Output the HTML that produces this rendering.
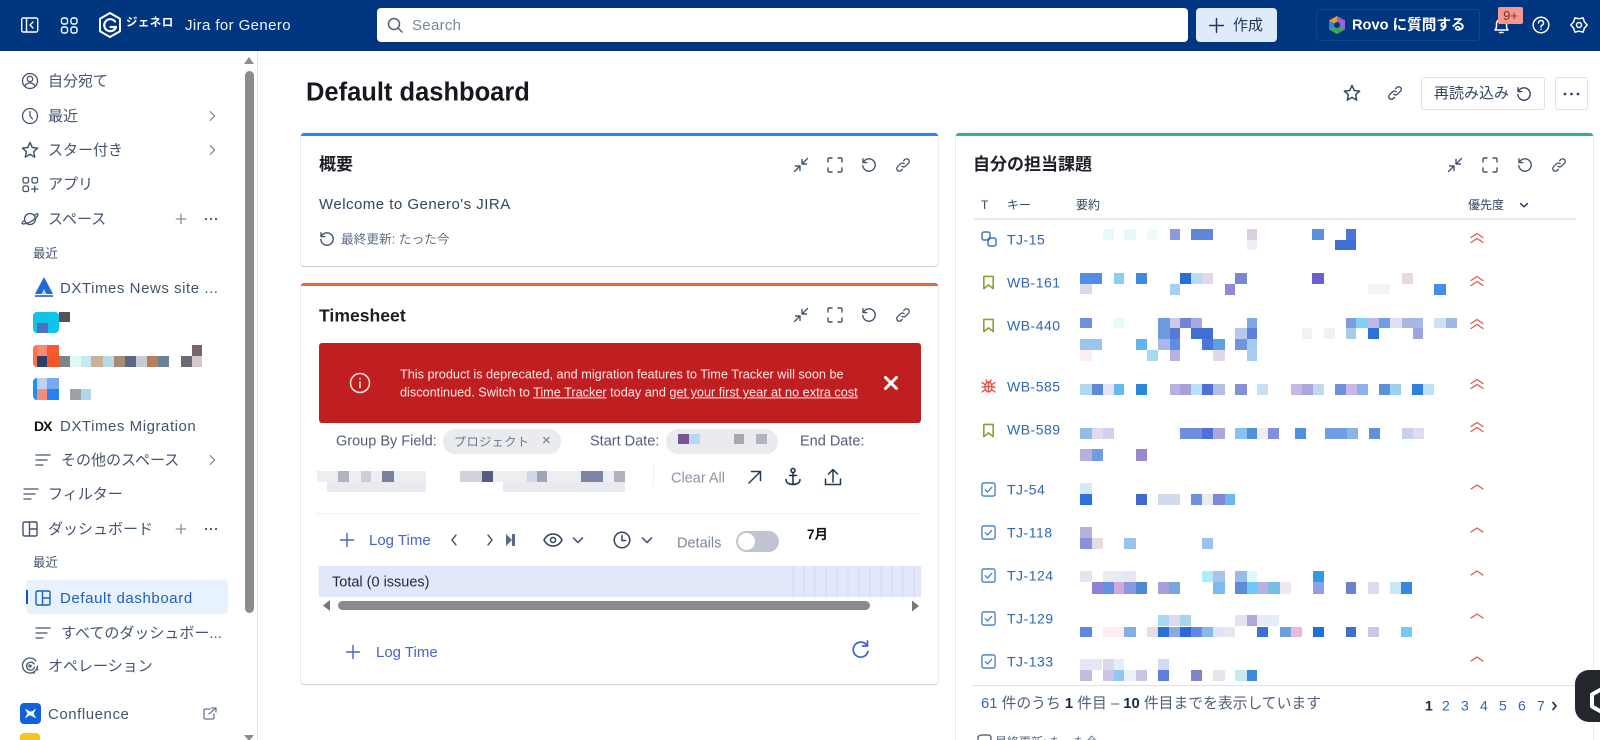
<!DOCTYPE html>
<html lang="ja"><head><meta charset="utf-8"><title>Default dashboard</title>
<style>
html,body{margin:0;padding:0;width:1600px;height:740px;overflow:hidden;background:#fff}
body{position:relative;font-family:"Liberation Sans","Noto Sans CJK JP",sans-serif;color:#42526e;font-size:14px;filter:blur(.3px)}
.t{position:absolute;white-space:nowrap;transform:translateY(-50%);line-height:1.2;margin-top:1px}
.b{position:absolute;box-sizing:border-box}
.card{position:absolute;box-sizing:border-box;background:#fff;border-radius:3px;box-shadow:0 0 1px rgba(9,30,66,.35),0 1px 1px rgba(9,30,66,.18)}
.s{color:#44546f;font-size:15px}
.e{color:#44546f;font-size:15px;letter-spacing:.55px}
.k{color:#2f66b8;font-size:14px;letter-spacing:.5px}
.h{color:#1c1f26;font-size:17px;font-weight:bold}
.lt{color:#4a62c9;font-size:15px}
svg{position:absolute;left:0;top:0}
</style></head><body>

<!-- top bar -->
<div class="b" style="left:0;top:0;width:1600px;height:51px;background:#00357f;border-bottom:1px solid #0a2f68"></div>
<div class="b" style="left:377px;top:8px;width:811px;height:34px;background:#fff;border-radius:4px"></div>
<div class="t" style="left:412px;top:25px;color:#7a869a;font-size:15px;letter-spacing:.3px">Search</div>
<div class="b" style="left:1196px;top:8px;width:81px;height:34px;background:#dfeafb;border-radius:4px"></div>
<div class="t" style="left:1233px;top:25px;color:#253858;font-size:15px">作成</div>
<div class="b" style="left:1316px;top:9px;width:164px;height:32px;border:1px solid #12478f;border-radius:4px"></div>
<div class="t" style="left:1352px;top:25px;color:#fff;font-size:14.6px;font-weight:bold">Rovo に質問する</div>
<div class="t" style="left:126px;top:23px;color:#fff;font-size:11.5px;font-weight:bold;letter-spacing:.4px">ジェネロ</div>
<div class="t" style="left:185px;top:25px;color:#f1f5fb;font-size:15px;letter-spacing:.4px">Jira for Genero</div>

<!-- sidebar -->
<div class="b" style="left:257px;top:51px;width:1px;height:689px;background:#e4e6ea"></div>
<div class="b" style="left:245px;top:71px;width:9px;height:542px;background:#8c8c8c;border-radius:5px"></div>
<div class="b" style="left:26px;top:580px;width:202px;height:34px;background:#e8f2fe;border-radius:4px"></div>
<div class="b" style="left:26px;top:590px;width:2px;height:14px;background:#0c55c4"></div>
<div class="t s" style="left:48px;top:81px">自分宛て</div>
<div class="t s" style="left:48px;top:116px">最近</div>
<div class="t s" style="left:48px;top:150px">スター付き</div>
<div class="t s" style="left:48px;top:184px">アプリ</div>
<div class="t s" style="left:48px;top:219px">スペース</div>
<div class="t s" style="left:33px;top:253px;font-size:12.4px">最近</div>
<div class="t e" style="left:60px;top:288px">DXTimes News site ...</div>
<div class="t e" style="left:60px;top:426px">DXTimes Migration</div>
<div class="t s" style="left:61px;top:460px">その他のスペース</div>
<div class="t s" style="left:48px;top:494px">フィルター</div>
<div class="t s" style="left:48px;top:529px">ダッシュボード</div>
<div class="t s" style="left:33px;top:562px;font-size:12.4px">最近</div>
<div class="t" style="left:60px;top:598px;color:#1f5fbf;font-size:15px;letter-spacing:.6px">Default dashboard</div>
<div class="t s" style="left:61px;top:633px">すべてのダッシュボー...</div>
<div class="t s" style="left:48px;top:666px">オペレーション</div>
<div class="t e" style="left:48px;top:714px">Confluence</div>
<div class="b" style="left:20px;top:733px;width:20px;height:10px;background:#f5c518;border-radius:4px"></div>
<div class="b" style="left:20px;top:703px;width:21px;height:21px;background:#0f62dc;border-radius:4px"></div>

<!-- main title -->
<div class="t" style="left:306px;top:92px;color:#15181f;font-size:25.5px;font-weight:bold">Default dashboard</div>
<div class="b" style="left:1421px;top:77px;width:124px;height:33px;border:1px solid #dfe1e6;border-radius:3px"></div>
<div class="t" style="left:1434px;top:93px;color:#344563;font-size:15px">再読み込み</div>
<div class="b" style="left:1555px;top:77px;width:33px;height:33px;border:1px solid #dfe1e6;border-radius:3px"></div>

<!-- cards -->
<div class="card" style="left:301px;top:133px;width:637px;height:133px;border-top:3px solid #2684ff"></div>
<div class="card" style="left:301px;top:283px;width:637px;height:401px;border-top:3px solid #e5683a"></div>
<div class="card" style="left:956px;top:133px;width:637px;height:640px;border-top:3px solid #36b37e"></div>

<div class="t h" style="left:319px;top:164px">概要</div>
<div class="t" style="left:319px;top:204px;color:#344563;font-size:15px;letter-spacing:.48px">Welcome to Genero's JIRA</div>
<div class="t" style="left:341px;top:239px;color:#5e6c84;font-size:12.7px">最終更新: たった今</div>

<div class="t h" style="left:319px;top:315px;font-size:17.6px">Timesheet</div>
<div class="b" style="left:319px;top:343px;width:602px;height:80px;background:#c01f22;border-radius:3px"></div>
<div class="t" style="left:400px;top:374px;color:#fde8e8;font-size:12.7px">This product is deprecated, and migration features to Time Tracker will soon be</div>
<div class="t" style="left:400px;top:392px;color:#fde8e8;font-size:12.7px">discontinued. Switch to <u>Time Tracker</u> today and <u>get your first year at no extra cost</u></div>
<div class="t" style="left:336px;top:441px;color:#505f79;font-size:14.5px">Group By Field:</div>
<div class="b" style="left:443px;top:429px;width:118px;height:25px;background:#e9ebef;border-radius:12px"></div>
<div class="t" style="left:454px;top:441px;color:#6b778c;font-size:12px;letter-spacing:.6px">プロジェクト</div>
<div class="t" style="left:542px;top:440px;color:#6b778c;font-size:15px">×</div>
<div class="t" style="left:590px;top:441px;color:#505f79;font-size:14.5px">Start Date:</div>
<div class="b" style="left:666px;top:429px;width:112px;height:25px;background:#e9ebef;border-radius:12px"></div>
<div class="t" style="left:800px;top:441px;color:#505f79;font-size:14.5px">End Date:</div>
<div class="b" style="left:653px;top:465px;width:1px;height:21px;background:#eef0f2"></div>
<div class="t" style="left:671px;top:478px;color:#8c95a6;font-size:14.5px">Clear All</div>
<div class="b" style="left:317px;top:513px;width:603px;height:1px;background:#eef0f3"></div>
<div class="t lt" style="left:369px;top:540px">Log Time</div>
<div class="t" style="left:677px;top:543px;color:#7a8699;font-size:14.5px">Details</div>
<div class="b" style="left:736px;top:531px;width:43px;height:21px;background:#c0c4d2;border-radius:11px"></div>
<div class="b" style="left:738px;top:533px;width:17px;height:17px;background:#fff;border-radius:50%"></div>
<div class="t" style="left:807px;top:534px;color:#111;font-size:13.5px;font-weight:bold">7月</div>
<div class="b" style="left:319px;top:566px;width:602px;height:31px;background:#e3e7fa"></div>
<div class="t" style="left:332px;top:582px;color:#1d2a44;font-size:14.5px">Total (0 issues)</div>
<div class="b" style="left:338px;top:601px;width:532px;height:9px;background:#8a8a8a;border-radius:5px"></div>
<div class="t lt" style="left:376px;top:652px">Log Time</div>

<div class="t h" style="left:973px;top:164px">自分の担当課題</div>
<div class="t" style="left:981px;top:204px;color:#344563;font-size:12px">T</div>
<div class="t" style="left:1007px;top:204px;color:#344563;font-size:12px">キー</div>
<div class="t" style="left:1076px;top:204px;color:#344563;font-size:12px">要約</div>
<div class="t" style="left:1468px;top:204px;color:#344563;font-size:12px">優先度</div>
<div class="b" style="left:974px;top:218px;width:602px;height:2px;background:#e6e8eb"></div>
<div class="t k" style="left:1007px;top:239px">TJ-15</div>
<div class="t k" style="left:1007px;top:282px">WB-161</div>
<div class="t k" style="left:1007px;top:325px">WB-440</div>
<div class="t k" style="left:1007px;top:386px">WB-585</div>
<div class="t k" style="left:1007px;top:429px">WB-589</div>
<div class="t k" style="left:1007px;top:489px">TJ-54</div>
<div class="t k" style="left:1007px;top:532px">TJ-118</div>
<div class="t k" style="left:1007px;top:575px">TJ-124</div>
<div class="t k" style="left:1007px;top:618px">TJ-129</div>
<div class="t k" style="left:1007px;top:661px">TJ-133</div>
<div class="b" style="left:973px;top:685px;width:603px;height:1px;background:#dcdfe4"></div>
<div class="t" style="left:981px;top:704px;color:#505f79;font-size:14.8px"><span style="color:#2f66b8">61</span> 件のうち <b style="color:#172b4d">1</b> 件目 – <b style="color:#172b4d">10</b> 件目までを表示しています</div>
<div class="t" style="left:1425px;top:705px;color:#172b4d;font-size:14px;font-weight:bold">1</div>
<div class="t k" style="left:1442px;top:705px;letter-spacing:0">2</div>
<div class="t k" style="left:1461px;top:705px;letter-spacing:0">3</div>
<div class="t k" style="left:1480px;top:705px;letter-spacing:0">4</div>
<div class="t k" style="left:1499px;top:705px;letter-spacing:0">5</div>
<div class="t k" style="left:1518px;top:705px;letter-spacing:0">6</div>
<div class="t k" style="left:1537px;top:705px;letter-spacing:0">7</div>
<div class="t" style="left:995px;top:741px;color:#5e6c84;font-size:12px">最終更新: たった今</div>
<div class="b" style="left:1575px;top:670px;width:40px;height:52px;background:#23272b;border-radius:14px"></div>

<svg width="1600" height="740" viewBox="0 0 1600 740" fill="none" stroke-linecap="round" stroke-linejoin="round">
<defs>
<symbol id="chev" viewBox="0 0 16 16"><path d="M6 3l5 5-5 5" stroke="currentColor" stroke-width="1.300"/></symbol>
<symbol id="shrink" viewBox="0 0 16 16"><path d="M1.500 14.500L6.500 9.500M2.500 9H7v4.500M14.500 1.500L9.500 6.500M13.500 7H9V2.500" stroke="currentColor" stroke-width="1.400"/></symbol>
<symbol id="full" viewBox="0 0 16 16"><path d="M1 5V2.200Q1 1 2.200 1H5M11 1h2.800Q15 1 15 2.200V5M15 11v2.800Q15 15 13.800 15H11M5 15H2.200Q1 15 1 13.800V11" stroke="currentColor" stroke-width="1.400"/></symbol>
<symbol id="redo" viewBox="0 0 16 16"><path d="M2.300 5.500A6.200 6.200 0 1 1 1.800 8.500M2 1.800V5.600H5.800" stroke="currentColor" stroke-width="1.400"/></symbol>
<symbol id="link" viewBox="0 0 16 16"><path d="M6.800 9.200a2.600 2.600 0 0 0 3.700 0l3-3a2.600 2.600 0 0 0-3.700-3.700L8.600 3.700M9.200 6.800a2.600 2.600 0 0 0-3.700 0l-3 3a2.600 2.600 0 0 0 3.700 3.700l1.200-1.200" stroke="currentColor" stroke-width="1.300"/></symbol>
<symbol id="star" viewBox="0 0 16 16"><path d="M8 1.300l2 4.500 4.800.5-3.600 3.200 1 4.800L8 11.900l-4.200 2.400 1-4.800L1.200 6.300 6 5.800z" stroke="currentColor" stroke-width="1.300"/></symbol>
<symbol id="list" viewBox="0 0 16 16"><path d="M1 3h14M1 8h11M1 13h7" stroke="currentColor" stroke-width="1.300"/></symbol>
<symbol id="dash" viewBox="0 0 16 16"><path d="M2.500 1h11Q15 1 15 2.500v11q0 1.500-1.500 1.500h-11Q1 15 1 13.500v-11Q1 1 2.500 1zM7.500 1v14M7.500 8H15" stroke="currentColor" stroke-width="1.400"/></symbol>
<symbol id="bm" viewBox="0 0 16 16"><path d="M3 1.500h10v13L8 10.500l-5 4z" stroke="currentColor" stroke-width="1.700"/></symbol>
<symbol id="chk" viewBox="0 0 16 16"><rect x="1" y="1" width="14" height="14" rx="2" stroke="currentColor" stroke-width="1.400"/><path d="M4.500 8.200l2.500 2.500 4.500-5" stroke="currentColor" stroke-width="1.300"/></symbol>
<symbol id="pp" viewBox="0 0 16 16"><path d="M2 7.500L8 3.500l6 4M2 12.500L8 8.500l6 4" stroke="currentColor" stroke-width="1.300"/></symbol>
<symbol id="p" viewBox="0 0 16 16"><path d="M2 10L8 6l6 4" stroke="currentColor" stroke-width="1.300"/></symbol>
<symbol id="dn" viewBox="0 0 16 16"><path d="M3.500 6L8 10.500 12.500 6" stroke="currentColor" stroke-width="1.700"/></symbol>
<symbol id="plus" viewBox="0 0 16 16"><path d="M8 1.500v13M1.500 8h13" stroke="currentColor" stroke-width="1.400"/></symbol>
</defs>

<!-- topbar icons -->
<g stroke="#fff" stroke-width="1.400">
<rect x="21.700" y="18" width="16" height="14" rx="1.500"/><path d="M26.500 18v14"/><path d="M33 22l-3 3 3 3"/>
<rect x="61.500" y="18" width="6" height="6" rx="2"/><rect x="71" y="18" width="6" height="6" rx="2"/><rect x="61.500" y="27" width="6" height="6" rx="2"/><rect x="71" y="27" width="6" height="6" rx="2"/>
<path d="M110 13l10 5.800v12.400L110 37l-10-5.800V18.800z" stroke-width="2"/>
<path d="M115 21.500a6 6 0 1 0 1 5.500h-5.500" stroke-width="2.200"/>
</g>
<circle cx="394" cy="24" r="5.500" stroke="#505f79" stroke-width="1.500"/><path d="M398 28l4 4" stroke="#505f79" stroke-width="1.500"/>
<use href="#plus" x="1208" y="17" width="17" height="17" color="#253858"/>
<path d="M1337 16l8 4.500v9l-8 4.500-8-4.500v-9z" fill="#3b7dd8"/><path d="M1337 16l8 4.500v9L1337 25z" fill="#9a63d8"/><path d="M1329 29.500l8-4.500 8 4.500-8 4.500z" fill="#3aa655"/><path d="M1329 20.500l8-4.500v9z" fill="#f0a020"/><circle cx="1337" cy="25" r="3" fill="#00357f"/>
<g stroke="#fff" stroke-width="1.500">
<path d="M1495 30c1.500-1.500 1.500-3 1.500-6a5 5 0 0 1 10 0c0 3 0 4.500 1.500 6zM1499.500 32.500h3.500"/>
<circle cx="1541" cy="25" r="7.800"/><path d="M1538.500 23a2.500 2.500 0 1 1 3.500 2.300c-.8.400-1 .8-1 1.700M1541 29.300v.1"/>
<path transform="translate(1579,25)" d="M8.200 0L5.400 3.100 4.100 7.100 0 6.200-4.100 7.100-5.400 3.100-8.200 0-5.400-3.100-4.100-7.100 0-6.200 4.100-7.100 5.400-3.100z" stroke-width="1.500"/><circle cx="1579" cy="25" r="2.500"/>
</g>
<rect x="1498" y="7" width="25" height="17" rx="2" fill="#f59890"/>
<text x="1510.500" y="20" text-anchor="middle" font-family="Liberation Sans,sans-serif" font-size="13" fill="#8a2a25">9+</text>

<!-- sidebar icons -->
<g color="#44546f" stroke="#44546f" stroke-width="1.300">
<circle cx="30" cy="81" r="7.500"/><circle cx="30" cy="79" r="2.700"/><path d="M24.800 86.300c1-2.300 3-3.300 5.200-3.300s4.200 1 5.200 3.300"/>
<circle cx="30" cy="116" r="7.500"/><path d="M30 111.500v4.500l2.500 3"/>
<rect x="23" y="177.500" width="5.500" height="5.500" rx="1.500"/><rect x="32" y="177.500" width="5.500" height="5.500" rx="1.500"/><rect x="23" y="186" width="5.500" height="5.500" rx="1.500"/><path d="M34.700 186v6M31.700 189h6"/>
<ellipse cx="30" cy="219" rx="5.500" ry="5.500"/><path d="M35 215c2-1.500 3-1.500 3-.5 0 2-4 6-9 8-4 1.600-7 2-7 .5 0-.7 1-1.500 2.500-2.500"/>
</g>
<use href="#star" x="21" y="141" width="18" height="18" color="#44546f"/>
<use href="#chev" x="205" y="109" width="14" height="14" color="#6b778c"/>
<use href="#chev" x="205" y="143" width="14" height="14" color="#6b778c"/>
<use href="#chev" x="205" y="453" width="14" height="14" color="#6b778c"/>
<use href="#plus" x="175" y="213" width="12" height="12" color="#6b778c"/>
<use href="#plus" x="175" y="523" width="12" height="12" color="#6b778c"/>
<g fill="#44546f"><circle cx="206" cy="219" r="1.100"/><circle cx="211" cy="219" r="1.100"/><circle cx="216" cy="219" r="1.100"/><circle cx="206" cy="529" r="1.100"/><circle cx="211" cy="529" r="1.100"/><circle cx="216" cy="529" r="1.100"/></g>
<path d="M44 277l9 17H35z" fill="#1c68dc"/><path d="M44 289l2.500 5h-5z" fill="#bcd4f5"/><rect x="35" y="295" width="18" height="2" fill="#4a7ec8"/>
<text x="34" y="431" font-family="Liberation Sans,sans-serif" font-size="14" font-weight="bold" fill="#111" letter-spacing="-1">DX</text>
<use href="#list" x="35" y="452" width="16" height="16" color="#44546f"/>
<use href="#list" x="23" y="486" width="16" height="16" color="#44546f"/>
<use href="#dash" x="22" y="521" width="16" height="16" color="#44546f"/>
<use href="#dash" x="35" y="590" width="16" height="16" color="#1f5fbf"/>
<use href="#list" x="35" y="625" width="16" height="16" color="#44546f"/>
<g stroke="#44546f" stroke-width="1.300"><path d="M36 661a7.500 7.500 0 1 0 1.500 5"/><path d="M34 664a4 4 0 1 0 .5 3"/><circle cx="30" cy="666" r="1"/><path d="M37.500 669.500l.1.100M34 673l.1.100" stroke-width="1.600"/></g>
<path d="M25 709c2 0 3 2 5.500 2.500S34 709 36 709l-2.500 4.500L36 718c-2 0-3-2-5.500-2.500S27 718 25 718l2.500-4.500z" fill="#fff"/>
<path d="M210 709h-4.500q-1.500 0-1.500 1.500v7q0 1.500 1.500 1.500h7q1.500 0 1.500-1.500V714M209 714l7-6M211.500 708H216v4" stroke="#6b778c" stroke-width="1.300"/>
<path d="M244 64l5-7 5 7z" fill="#8c8c8c"/><path d="M244 735l5 6 5-6z" fill="#8c8c8c"/>

<!-- sidebar mosaics -->
<rect x="33" y="312" width="26" height="21" rx="4" fill="#12c3e8"/><rect x="59" y="312" width="11" height="10" fill="#50555a"/><rect x="37" y="323" width="11" height="10" fill="#4f6fc8"/>
<rect x="33" y="345" width="26" height="22" rx="4" fill="#f8724c"/><rect x="37" y="345" width="10" height="11" fill="#fb8a70"/><rect x="47" y="345" width="12" height="11" fill="#f85a30"/><rect x="37" y="356" width="10" height="11" fill="#2d3e6a"/><rect x="47" y="356" width="12" height="11" fill="#f0562a"/><rect x="59" y="356" width="11" height="11" fill="#808488"/><rect x="70" y="356" width="11" height="11" fill="#e0f8f8"/><rect x="81" y="356" width="10" height="11" fill="#c8e8f0"/><rect x="91" y="356" width="12" height="11" fill="#cdb098"/><rect x="103" y="356" width="11" height="11" fill="#b8dce4"/><rect x="114" y="356" width="11" height="11" fill="#a88a70"/><rect x="125" y="356" width="11" height="11" fill="#5a6888"/><rect x="136" y="356" width="11" height="11" fill="#c8ccd0"/><rect x="147" y="356" width="11" height="11" fill="#b87e5c"/><rect x="158" y="356" width="11" height="11" fill="#6a8294"/><rect x="181" y="356" width="11" height="11" fill="#6a6a74"/><rect x="192" y="356" width="10" height="11" fill="#d4c8cc"/><rect x="192" y="345" width="10" height="11" fill="#7a6468"/>
<rect x="33" y="378" width="12" height="22" rx="4" fill="#1e90f0"/><rect x="37" y="378" width="10" height="11" fill="#b8d4f8"/><rect x="47" y="378" width="12" height="11" fill="#78a8f0"/><rect x="37" y="389" width="10" height="11" fill="#f88a78"/><rect x="47" y="389" width="12" height="11" fill="#2a80f0"/><rect x="70" y="389" width="11" height="11" fill="#9aa2a8"/><rect x="81" y="389" width="10" height="11" fill="#b0d8e8"/>

<!-- header actions -->
<use href="#star" x="1343" y="84" width="18" height="18" color="#344563"/>
<use href="#link" x="1387" y="85" width="16" height="16" color="#344563"/>
<use href="#redo" x="1516" y="86" width="16" height="16" color="#344563"/>
<g fill="#344563"><circle cx="1565" cy="94" r="1.400"/><circle cx="1571.500" cy="94" r="1.400"/><circle cx="1578" cy="94" r="1.400"/></g>

<!-- card toolbars -->
<g color="#44546f">
<use href="#shrink" x="793" y="157" width="16" height="16"/><use href="#full" x="827" y="157" width="16" height="16"/><use href="#redo" x="861" y="157" width="16" height="16"/><use href="#link" x="895" y="157" width="16" height="16"/>
<use href="#shrink" x="793" y="307" width="16" height="16"/><use href="#full" x="827" y="307" width="16" height="16"/><use href="#redo" x="861" y="307" width="16" height="16"/><use href="#link" x="895" y="307" width="16" height="16"/>
<use href="#shrink" x="1447" y="157" width="16" height="16"/><use href="#full" x="1482" y="157" width="16" height="16"/><use href="#redo" x="1517" y="157" width="16" height="16"/><use href="#link" x="1551" y="157" width="16" height="16"/>
<use href="#redo" x="319" y="231" width="16" height="16"/>
</g>

<!-- banner icons -->
<circle cx="360" cy="383" r="9.500" stroke="#fde8e8" stroke-width="1.500"/><path d="M360 382v5.500M360 378.500v.1" stroke="#fde8e8" stroke-width="1.600"/>
<path d="M885.500 377.500l11 11M896.500 377.500l-11 11" stroke="#fff" stroke-width="3"/>

<!-- timesheet toolbar -->
<path d="M749 483l11-11M751.500 471.500h9v9" stroke="#253858" stroke-width="1.500"/>
<g stroke="#172b55" stroke-width="1.500"><circle cx="793" cy="470.500" r="2"/><path d="M793 472.500v12M789.500 475.500h7M786 479.500c0 3.500 3.500 5 7 5s7-1.500 7-5"/></g>
<path d="M833 482v-12M828.500 474l4.500-4.500 4.500 4.500M825.500 479v5.500h15V479" stroke="#253858" stroke-width="1.500"/>
<use href="#plus" x="339" y="532" width="16" height="16" color="#4a62c9"/>
<path d="M456 535l-4 5 4 5M488 535l4 5-4 5" stroke="#3a4760" stroke-width="1.400"/>
<path d="M506 534l6 6-6 6z" fill="#5a6a85"/><rect x="512" y="534" width="3" height="12" fill="#5a6a85"/>
<g stroke="#344563" stroke-width="1.500"><path d="M544 540c2-4 5.500-6 9-6s7 2 9 6c-2 4-5.500 6-9 6s-7-2-9-6z"/><circle cx="553" cy="540" r="2.500"/><circle cx="622" cy="540" r="7.800"/><path d="M622 535.500v5h3.500"/></g>
<use href="#dn" x="570" y="532" width="16" height="16" color="#505f79"/>
<use href="#dn" x="639" y="532" width="16" height="16" color="#505f79"/>
<path d="M793 566v31M804 566v31M815 566v31M826 566v31M837 566v31M848 566v31M859 566v31M870 566v31M881 566v31M892 566v31M903 566v31M914 566v31" stroke="#d3d8f0" stroke-width="1"/>
<path d="M323 605.500l7-5.500v11z" fill="#777"/><path d="M912 600.500l7 5.500-7 5.500z" fill="#777"/>
<use href="#plus" x="345" y="644" width="16" height="16" color="#4a62c9"/>
<path d="M867 645.500a7.500 7.500 0 1 0 1 6M867.500 641v5h-5" stroke="#3f63c8" stroke-width="1.700"/>

<!-- timesheet blurred values -->
<g stroke="none">
<rect x="678" y="434" width="11" height="10" fill="#7a5490"/><rect x="689" y="434" width="11" height="10" fill="#b8d8f8"/><rect x="734" y="434" width="10" height="10" fill="#a8a8b0"/><rect x="756" y="434" width="11" height="10" fill="#b0b4c0"/>
<rect x="317" y="471" width="109" height="11" fill="#eceef2"/><rect x="327" y="482" width="99" height="10" fill="#e8eaf0"/><rect x="338" y="471" width="11" height="11" fill="#b0b4c0"/><rect x="361" y="471" width="10" height="11" fill="#ccd0d4"/><rect x="382" y="471" width="12" height="11" fill="#7a80a0"/>
<rect x="460" y="471" width="165" height="11" fill="#eceef2"/><rect x="503" y="482" width="122" height="10" fill="#e8eaf0"/><rect x="460" y="471" width="22" height="11" fill="#d0d4d8"/><rect x="482" y="471" width="11" height="11" fill="#5a5c84"/><rect x="527" y="471" width="10" height="11" fill="#d4d8e4"/><rect x="537" y="471" width="10" height="11" fill="#a0a4b8"/><rect x="581" y="471" width="22" height="11" fill="#7e84a4"/><rect x="614" y="471" width="11" height="11" fill="#b0b2b8"/>
</g>

<!-- table header chevron -->
<use href="#dn" x="1518" y="199" width="12" height="12" color="#172b4d"/>

<!-- issue type icons -->
<g stroke="#3a78c8" stroke-width="1.500"><rect x="982" y="232" width="8" height="8" rx="2"/><rect x="988" y="238" width="8" height="8" rx="2"/></g>
<use href="#bm" x="981" y="275" width="15" height="15" color="#8aa12e"/>
<use href="#bm" x="981" y="318" width="15" height="15" color="#8aa12e"/>
<use href="#bm" x="981" y="423" width="15" height="15" color="#8aa12e"/>
<g stroke="#e5493a" stroke-width="1.300"><ellipse cx="988.500" cy="387" rx="3.500" ry="5"/><path d="M985 386.500h7M988.500 382v10M986 380l1.500 2.500M991 380l-1.500 2.500M982 382.500l3 2M995 382.500l-3 2M982 387h3M995 387h-3M982 392l3-2M995 392l-3-2"/></g>
<g color="#3f7ec8">
<use href="#chk" x="981" y="482" width="15" height="15"/><use href="#chk" x="981" y="525" width="15" height="15"/><use href="#chk" x="981" y="568" width="15" height="15"/><use href="#chk" x="981" y="611" width="15" height="15"/><use href="#chk" x="981" y="654" width="15" height="15"/>
</g>
<g color="#e2584c">
<use href="#pp" x="1469" y="230" width="16" height="16"/><use href="#pp" x="1469" y="273" width="16" height="16"/><use href="#pp" x="1469" y="316" width="16" height="16"/><use href="#pp" x="1469" y="376" width="16" height="16"/><use href="#pp" x="1469" y="419" width="16" height="16"/>
</g>
<g color="#cf5a50">
<use href="#p" x="1469" y="479" width="16" height="16"/><use href="#p" x="1469" y="522" width="16" height="16"/><use href="#p" x="1469" y="565" width="16" height="16"/><use href="#p" x="1469" y="608" width="16" height="16"/><use href="#p" x="1469" y="651" width="16" height="16"/>
</g>
<path d="M1553 702.500l3 3.500-3 3.500" stroke="#172b4d" stroke-width="1.700"/>
<path d="M1600 690l-8 4.500v12l8 4.500" stroke="#fff" stroke-width="4"/>
<path d="M978 746v-8q0-3 4-3h6q3 0 3 3v2" stroke="#5e6c84" stroke-width="1.500"/>

<!-- blurred summaries -->
<g stroke="none">
<!-- TJ-15 -->
<rect x="1103" y="229" width="11" height="11" fill="#e6fafa"/><rect x="1124" y="229" width="12" height="11" fill="#e8f8f8"/><rect x="1147" y="229" width="11" height="11" fill="#eefbfb"/><rect x="1170" y="229" width="10" height="11" fill="#8a9bd8"/><rect x="1191" y="229" width="22" height="11" fill="#5f86dc"/><rect x="1247" y="229" width="10" height="11" fill="#d8cfe0"/><rect x="1247" y="240" width="10" height="10" fill="#f0edf4"/><rect x="1312" y="229" width="12" height="11" fill="#5b8fe0"/><rect x="1346" y="229" width="10" height="11" fill="#4a76d6"/><rect x="1335" y="240" width="21" height="10" fill="#3f6fd2"/>
<!-- WB-161 -->
<rect x="1080" y="273" width="22" height="11" fill="#4f8fe6"/><rect x="1114" y="273" width="10" height="11" fill="#8fcdf0"/><rect x="1136" y="273" width="11" height="11" fill="#3f8ade"/><rect x="1180" y="273" width="11" height="11" fill="#2a6fd2"/><rect x="1191" y="273" width="11" height="11" fill="#b5dcf5"/><rect x="1202" y="273" width="11" height="11" fill="#e4d8e8"/><rect x="1235" y="273" width="12" height="11" fill="#7a86d2"/><rect x="1080" y="284" width="12" height="10" fill="#dcd8ea"/><rect x="1170" y="284" width="10" height="11" fill="#a5d0f8"/><rect x="1225" y="284" width="10" height="11" fill="#9088d8"/><rect x="1312" y="273" width="12" height="11" fill="#6a5ed0"/><rect x="1402" y="273" width="11" height="11" fill="#ead8e0"/><rect x="1434" y="284" width="12" height="11" fill="#3f8ee8"/><rect x="1368" y="284" width="22" height="10" fill="#f3f3f6"/>
<!-- WB-440 -->
<rect x="1080" y="318" width="12" height="10" fill="#6f90e0"/><rect x="1114" y="318" width="10" height="10" fill="#e5fbfb"/><rect x="1158" y="318" width="12" height="10" fill="#6f9ae0"/><rect x="1170" y="318" width="10" height="10" fill="#d0c8e8"/><rect x="1180" y="318" width="11" height="10" fill="#6f84d8"/><rect x="1191" y="318" width="11" height="10" fill="#a8a8e0"/><rect x="1247" y="318" width="10" height="10" fill="#7fa8e4"/>
<rect x="1158" y="328" width="12" height="11" fill="#6f9ae0"/><rect x="1170" y="328" width="10" height="11" fill="#5a78d8"/><rect x="1191" y="328" width="22" height="11" fill="#3f70d0"/><rect x="1235" y="328" width="12" height="11" fill="#b8c8ec"/><rect x="1247" y="328" width="10" height="11" fill="#5f80d8"/>
<rect x="1080" y="339" width="22" height="11" fill="#9cc4ec"/><rect x="1136" y="339" width="11" height="11" fill="#62b4ec"/><rect x="1158" y="339" width="12" height="11" fill="#aab8ec"/><rect x="1170" y="339" width="10" height="11" fill="#5f8ee0"/><rect x="1202" y="339" width="11" height="11" fill="#4a78d8"/><rect x="1213" y="339" width="12" height="11" fill="#5aa0e4"/><rect x="1235" y="339" width="12" height="11" fill="#6f95de"/><rect x="1247" y="339" width="10" height="11" fill="#a8c8ec"/>
<rect x="1080" y="350" width="12" height="11" fill="#fbeef2"/><rect x="1147" y="350" width="11" height="11" fill="#a8d8f0"/><rect x="1170" y="350" width="10" height="11" fill="#b8b0e0"/><rect x="1213" y="350" width="12" height="11" fill="#e0d8e8"/><rect x="1247" y="350" width="10" height="11" fill="#a8cdf0"/>
<rect x="1346" y="318" width="10" height="10" fill="#7f9ce0"/><rect x="1356" y="318" width="12" height="10" fill="#7fd0f4"/><rect x="1368" y="318" width="11" height="10" fill="#c0b8e8"/><rect x="1379" y="318" width="11" height="10" fill="#6f9ee4"/><rect x="1390" y="318" width="12" height="10" fill="#e0e0f2"/><rect x="1402" y="318" width="21" height="10" fill="#a8b8e4"/><rect x="1434" y="318" width="12" height="10" fill="#d0e0f4"/><rect x="1446" y="318" width="11" height="10" fill="#a0b8e4"/>
<rect x="1346" y="328" width="10" height="11" fill="#a8cce8"/><rect x="1368" y="328" width="11" height="11" fill="#2a72d4"/><rect x="1413" y="328" width="10" height="11" fill="#a0a4dc"/><rect x="1302" y="328" width="10" height="11" fill="#f0f2f4"/><rect x="1324" y="328" width="11" height="11" fill="#f2f2f4"/>
<!-- WB-585 -->
<rect x="1080" y="384" width="12" height="11" fill="#b0d8f0"/><rect x="1092" y="384" width="11" height="11" fill="#5f88d8"/><rect x="1103" y="384" width="11" height="11" fill="#e4e4f4"/><rect x="1114" y="384" width="10" height="11" fill="#68b8f0"/><rect x="1136" y="384" width="11" height="11" fill="#2a88d8"/><rect x="1170" y="384" width="10" height="11" fill="#b8b0e0"/><rect x="1180" y="384" width="11" height="11" fill="#a8a0d8"/><rect x="1191" y="384" width="11" height="11" fill="#b8e0f8"/><rect x="1202" y="384" width="11" height="11" fill="#5070d8"/><rect x="1213" y="384" width="12" height="11" fill="#b0c0e4"/><rect x="1235" y="384" width="12" height="11" fill="#8890d4"/><rect x="1257" y="384" width="11" height="11" fill="#c8e0f0"/><rect x="1291" y="384" width="11" height="11" fill="#c8b8e0"/><rect x="1302" y="384" width="11" height="11" fill="#a8a8dc"/><rect x="1313" y="384" width="11" height="11" fill="#c0d8f0"/><rect x="1335" y="384" width="11" height="11" fill="#6f90dc"/><rect x="1346" y="384" width="11" height="11" fill="#c8b8e8"/><rect x="1357" y="384" width="11" height="11" fill="#8fb0e8"/><rect x="1379" y="384" width="11" height="11" fill="#5f90e0"/><rect x="1390" y="384" width="11" height="11" fill="#a0d0f0"/><rect x="1412" y="384" width="11" height="11" fill="#2f80e0"/><rect x="1423" y="384" width="11" height="11" fill="#c0e0f4"/>
<!-- WB-589 -->
<rect x="1080" y="428" width="12" height="11" fill="#90bce8"/><rect x="1092" y="428" width="11" height="11" fill="#e0dcf0"/><rect x="1103" y="428" width="11" height="11" fill="#d4d0ea"/><rect x="1180" y="428" width="22" height="11" fill="#6f8ee0"/><rect x="1202" y="428" width="11" height="11" fill="#5070d8"/><rect x="1213" y="428" width="12" height="11" fill="#a8a8dc"/><rect x="1235" y="428" width="12" height="11" fill="#88c0f0"/><rect x="1247" y="428" width="10" height="11" fill="#4f90d8"/><rect x="1257" y="428" width="11" height="11" fill="#f0ecf4"/><rect x="1268" y="428" width="11" height="11" fill="#7f90e0"/><rect x="1295" y="428" width="11" height="11" fill="#4f8fe0"/><rect x="1325" y="428" width="22" height="11" fill="#6f9ee4"/><rect x="1347" y="428" width="11" height="11" fill="#88b4e8"/><rect x="1369" y="428" width="11" height="11" fill="#5f90dc"/><rect x="1402" y="428" width="11" height="11" fill="#c8d0ec"/><rect x="1413" y="428" width="11" height="11" fill="#e0dcf0"/>
<rect x="1080" y="449" width="12" height="12" fill="#b8b0dc"/><rect x="1092" y="449" width="11" height="12" fill="#6f9ee0"/><rect x="1136" y="449" width="11" height="12" fill="#9a88cc"/>
<!-- TJ-54 -->
<rect x="1080" y="483" width="12" height="11" fill="#d4e8f6"/><rect x="1080" y="494" width="12" height="11" fill="#2a72e0"/><rect x="1136" y="494" width="11" height="11" fill="#3f68d0"/><rect x="1158" y="494" width="22" height="11" fill="#d0daec"/><rect x="1191" y="494" width="11" height="11" fill="#6f90dc"/><rect x="1202" y="494" width="11" height="11" fill="#e8ecf0"/><rect x="1213" y="494" width="12" height="11" fill="#7f88d8"/><rect x="1225" y="494" width="10" height="11" fill="#70b4f0"/>
<!-- TJ-118 -->
<rect x="1080" y="527" width="12" height="11" fill="#b8b0dc"/><rect x="1080" y="538" width="12" height="11" fill="#8f90dc"/><rect x="1092" y="538" width="11" height="11" fill="#e8dce0"/><rect x="1124" y="538" width="12" height="11" fill="#98c4ec"/><rect x="1202" y="538" width="11" height="11" fill="#98c4f0"/>
<!-- TJ-124 -->
<rect x="1080" y="571" width="12" height="11" fill="#e4e4f0"/><rect x="1103" y="571" width="11" height="11" fill="#ecebf4"/><rect x="1114" y="571" width="10" height="11" fill="#e4ecf4"/><rect x="1124" y="571" width="12" height="11" fill="#ece4f0"/><rect x="1202" y="571" width="11" height="11" fill="#b0ecf8"/><rect x="1213" y="571" width="12" height="11" fill="#a8c4e8"/><rect x="1235" y="571" width="12" height="11" fill="#98bce8"/><rect x="1247" y="571" width="10" height="11" fill="#e0f8fc"/>
<rect x="1092" y="582" width="11" height="12" fill="#9080d8"/><rect x="1103" y="582" width="11" height="12" fill="#6690e0"/><rect x="1114" y="582" width="10" height="12" fill="#d0a8dc"/><rect x="1124" y="582" width="12" height="12" fill="#8898e0"/><rect x="1136" y="582" width="11" height="12" fill="#4f88d8"/><rect x="1158" y="582" width="11" height="12" fill="#a8a0d8"/><rect x="1169" y="582" width="11" height="12" fill="#78a4e0"/><rect x="1213" y="582" width="12" height="12" fill="#78bcf0"/><rect x="1235" y="582" width="12" height="12" fill="#5f8cd8"/><rect x="1247" y="582" width="10" height="12" fill="#70c8f8"/><rect x="1257" y="582" width="11" height="12" fill="#b8b0e0"/><rect x="1268" y="582" width="12" height="12" fill="#78bce8"/><rect x="1280" y="582" width="11" height="12" fill="#f0e8f0"/><rect x="1313" y="571" width="11" height="11" fill="#2f9ce0"/><rect x="1313" y="582" width="11" height="12" fill="#90a0e8"/><rect x="1346" y="582" width="10" height="12" fill="#7080d0"/><rect x="1368" y="582" width="11" height="12" fill="#dcdcec"/><rect x="1390" y="582" width="11" height="12" fill="#c8e8f8"/><rect x="1401" y="582" width="11" height="12" fill="#3888e0"/>
<!-- TJ-129 -->
<rect x="1158" y="615" width="11" height="11" fill="#a8d8f4"/><rect x="1169" y="615" width="11" height="11" fill="#e0d8ec"/><rect x="1180" y="615" width="11" height="11" fill="#a8d4ec"/><rect x="1235" y="615" width="12" height="11" fill="#e4e4f0"/><rect x="1247" y="615" width="10" height="11" fill="#b0a8dc"/><rect x="1257" y="615" width="22" height="11" fill="#e4ecf8"/>
<rect x="1080" y="627" width="12" height="10" fill="#5f88e0"/><rect x="1103" y="627" width="21" height="10" fill="#faeef2"/><rect x="1124" y="627" width="12" height="10" fill="#80b0e4"/><rect x="1147" y="627" width="11" height="10" fill="#e4dce8"/><rect x="1158" y="627" width="11" height="10" fill="#2a70d8"/><rect x="1169" y="627" width="11" height="10" fill="#8fa8e0"/><rect x="1180" y="627" width="11" height="10" fill="#2a68d8"/><rect x="1191" y="627" width="11" height="10" fill="#6088e4"/><rect x="1202" y="627" width="11" height="10" fill="#88b8ec"/><rect x="1213" y="627" width="12" height="10" fill="#dce4f4"/><rect x="1225" y="627" width="10" height="10" fill="#e4e8ec"/><rect x="1257" y="627" width="11" height="10" fill="#3f70d8"/><rect x="1280" y="627" width="11" height="10" fill="#70a0dc"/><rect x="1291" y="627" width="11" height="10" fill="#e8b8dc"/><rect x="1313" y="627" width="11" height="10" fill="#2070e0"/><rect x="1346" y="627" width="10" height="10" fill="#3f70d0"/><rect x="1368" y="627" width="11" height="10" fill="#ccc8e8"/><rect x="1401" y="627" width="11" height="10" fill="#78c8f4"/>
<!-- TJ-133 -->
<rect x="1080" y="659" width="22" height="11" fill="#e4e8f6"/><rect x="1103" y="659" width="11" height="11" fill="#dcd8e8"/><rect x="1114" y="659" width="10" height="11" fill="#e8ecf8"/><rect x="1158" y="659" width="11" height="11" fill="#d0dcf4"/><rect x="1080" y="670" width="12" height="11" fill="#c4bcdc"/><rect x="1103" y="670" width="11" height="11" fill="#ccc4e4"/><rect x="1114" y="670" width="10" height="11" fill="#90c8f0"/><rect x="1124" y="670" width="12" height="11" fill="#eef0f8"/><rect x="1136" y="670" width="11" height="11" fill="#ccc4e0"/><rect x="1158" y="670" width="11" height="11" fill="#5f80dc"/><rect x="1191" y="670" width="11" height="11" fill="#7f84cc"/><rect x="1213" y="670" width="12" height="11" fill="#e4e4ec"/><rect x="1235" y="670" width="12" height="11" fill="#c8e8f4"/><rect x="1247" y="670" width="10" height="11" fill="#3c88dc"/>
</g>
</svg>
</body></html>
